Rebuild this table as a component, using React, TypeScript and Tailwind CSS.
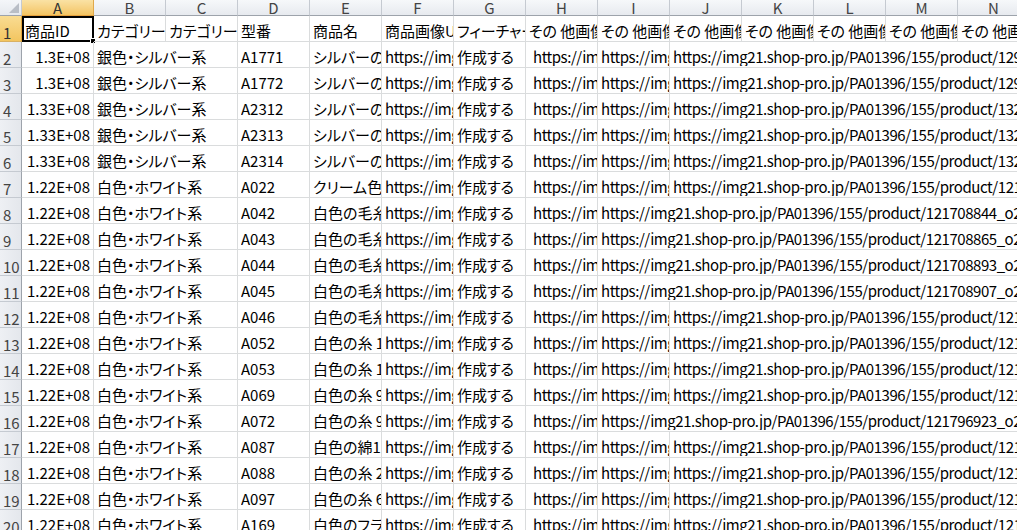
import React from "react";

type Cell = { t?: string; span?: number; right?: boolean; pl?: boolean; u?: boolean };

const COLS = ["A", "B", "C", "D", "E", "F", "G", "H", "I", "J", "K", "L", "M", "N"];
const URL = "https://img21.shop-pro.jp/PA01396/155/product/";

const header: Cell[] = [
  { t: "商品ID" },
  { t: "カテゴリー(大)" },
  { t: "カテゴリー(小)" },
  { t: "型番" },
  { t: "商品名" },
  { t: "商品画像URL" },
  { t: "フィーチャー画像" },
  { t: "その 他画像URL1" },
  { t: "その 他画像URL2" },
  { t: "その 他画像URL3" },
  { t: "その 他画像URL4" },
  { t: "その 他画像URL5" },
  { t: "その 他画像URL6" },
  { t: "その 他画像URL7" },
];

type R = { num: string; cat: string; code: string; name: string; id: string; full?: boolean };

const data: R[] = [
  { num: "1.3E+08", cat: "銀色・シルバー系", code: "A1771", name: "シルバーのネックレス", id: "129538551_o2.jpg" },
  { num: "1.3E+08", cat: "銀色・シルバー系", code: "A1772", name: "シルバーのネックレス", id: "129538598_o2.jpg" },
  { num: "1.33E+08", cat: "銀色・シルバー系", code: "A2312", name: "シルバーのブレスレット", id: "132876412_o2.jpg" },
  { num: "1.33E+08", cat: "銀色・シルバー系", code: "A2313", name: "シルバーのブレスレット", id: "132876455_o2.jpg" },
  { num: "1.33E+08", cat: "銀色・シルバー系", code: "A2314", name: "シルバーのブレスレット", id: "132876498_o2.jpg" },
  { num: "1.22E+08", cat: "白色・ホワイト系", code: "A022", name: "クリーム色(生成り)", id: "121708812_o2.jpg" },
  { num: "1.22E+08", cat: "白色・ホワイト系", code: "A042", name: "白色の毛糸", id: "121708844_o2.jpg", full: true },
  { num: "1.22E+08", cat: "白色・ホワイト系", code: "A043", name: "白色の毛糸", id: "121708865_o2.jpg", full: true },
  { num: "1.22E+08", cat: "白色・ホワイト系", code: "A044", name: "白色の毛糸", id: "121708893_o2.jpg", full: true },
  { num: "1.22E+08", cat: "白色・ホワイト系", code: "A045", name: "白色の毛糸", id: "121708907_o2.jpg", full: true },
  { num: "1.22E+08", cat: "白色・ホワイト系", code: "A046", name: "白色の毛糸", id: "121708925_o2.jpg" },
  { num: "1.22E+08", cat: "白色・ホワイト系", code: "A052", name: "白色の糸 1番", id: "121709011_o2.jpg" },
  { num: "1.22E+08", cat: "白色・ホワイト系", code: "A053", name: "白色の糸 1番", id: "121709034_o2.jpg" },
  { num: "1.22E+08", cat: "白色・ホワイト系", code: "A069", name: "白色の糸 9番", id: "121796901_o2.jpg" },
  { num: "1.22E+08", cat: "白色・ホワイト系", code: "A072", name: "白色の糸 9番", id: "121796923_o2.jpg", full: true },
  { num: "1.22E+08", cat: "白色・ホワイト系", code: "A087", name: "白色の綿1(ホワイト)", id: "121797045_o2.jpg" },
  { num: "1.22E+08", cat: "白色・ホワイト系", code: "A088", name: "白色の糸 2番", id: "121797068_o2.jpg" },
  { num: "1.22E+08", cat: "白色・ホワイト系", code: "A097", name: "白色の糸 6番", id: "121797092_o2.jpg" },
  { num: "1.22E+08", cat: "白色・ホワイト系", code: "A169", name: "白色のフランス糸", id: "121797120_o2.jpg" },
];

function rowCells(r: R): Cell[] {
  const cells: Cell[] = [
    { t: r.num, right: true },
    { t: r.cat, span: 2 },
    { t: r.code },
    { t: r.name },
    { t: URL + r.id.replace("_o2", ""), u: true },
    { t: "作成する" },
    { t: URL + r.id.replace("_o2", "_o1"), pl: true, u: true },
  ];
  if (r.full) {
    cells.push({ t: URL + r.id, span: 6, u: true });
  } else {
    cells.push({ t: URL + r.id.replace("_o2", "_o3"), u: true });
    cells.push({ t: URL + r.id, span: 5, u: true });
  }
  return cells;
}

function DataCell({ c, sel }: { c: Cell; sel?: boolean }) {
  const span = c.span ?? 1;
  const w = span * 72;
  return (
    <div
      className={
        "relative shrink-0 h-full flex items-end border-r border-b border-[#dadcdd] pb-[1px] " +
        (c.right ? "justify-end pr-[3px] " : c.pl ? "pl-[7px] " : "pl-[3px] ")
      }
      style={{ width: w }}
    >
      <div className="overflow-hidden whitespace-pre w-full">
        <span
          className={
            "block leading-[19px] " + (c.right ? "text-right " : "") + (c.u ? "tracking-[-0.45px]" : "")
          }
        >
          {c.t}
        </span>
      </div>
      {sel && (
        <>
          <div className="absolute left-0 top-0 -right-[1px] -bottom-[1px] border-2 border-black pointer-events-none" />
          <div className="absolute -right-[3px] -bottom-[3px] w-[6px] h-[6px] bg-black border border-white" />
        </>
      )}
    </div>
  );
}

function RowHeader({ n, sel }: { n: number; sel?: boolean }) {
  return (
    <div
      className={
        "shrink-0 w-[22px] h-full flex items-end pl-[3px] pb-[1px] border-r border-b text-[15px] leading-[15px] " +
        (sel
          ? "bg-gradient-to-b from-[#f9dc92] to-[#f3c55f] border-r-[#e2a33c] border-b-[#d9b163] text-[#333]"
          : "bg-gradient-to-r from-[#eef0f4] to-[#e4e7ec] border-r-[#9da3ab] border-b-[#c5cad1] text-[#444]")
      }
    >
      {n}
    </div>
  );
}

export default function App() {
  return (
    <div className="w-[1017px] h-[530px] overflow-hidden bg-white text-black text-[15px] font-['Noto_Sans_CJK_JP',sans-serif] [font-feature-settings:'palt']">
      <div className="w-[1030px]">
        <div className="flex h-[16px]">
          <div className="relative shrink-0 w-[22px] h-full bg-gradient-to-b from-[#f4f6f9] to-[#e6e9ee] border-r border-b border-r-[#c5cad1] border-b-[#9da3ab]">
            <svg className="absolute right-[2px] bottom-[2px]" width="10" height="10" viewBox="0 0 10 10">
              <polygon points="10,0 10,10 0,10" fill="#b9bec6" />
            </svg>
          </div>
          {COLS.map((c, i) => (
            <div
              key={c}
              className={
                "shrink-0 w-[72px] h-full flex items-center justify-center border-r border-b text-[15px] leading-[15px] " +
                (i === 0
                  ? "bg-gradient-to-b from-[#fae2a4] to-[#f3c462] border-r-[#e0a94b] border-b-[#e6a03c] text-[#333]"
                  : "bg-gradient-to-b from-[#f6f8fa] to-[#e7eaef] border-r-[#c5cad1] border-b-[#9da3ab] text-[#444]")
              }
            >
              {c}
            </div>
          ))}
        </div>
        <div className="flex h-[26px]">
          <RowHeader n={1} sel />
          {header.map((c, i) => (
            <DataCell key={i} c={c} sel={i === 0} />
          ))}
        </div>
        {data.map((r, ri) => (
          <div key={ri} className="flex h-[26px]">
            <RowHeader n={ri + 2} />
            {rowCells(r).map((c, i) => (
              <DataCell key={i} c={c} />
            ))}
          </div>
        ))}
      </div>
    </div>
  );
}
